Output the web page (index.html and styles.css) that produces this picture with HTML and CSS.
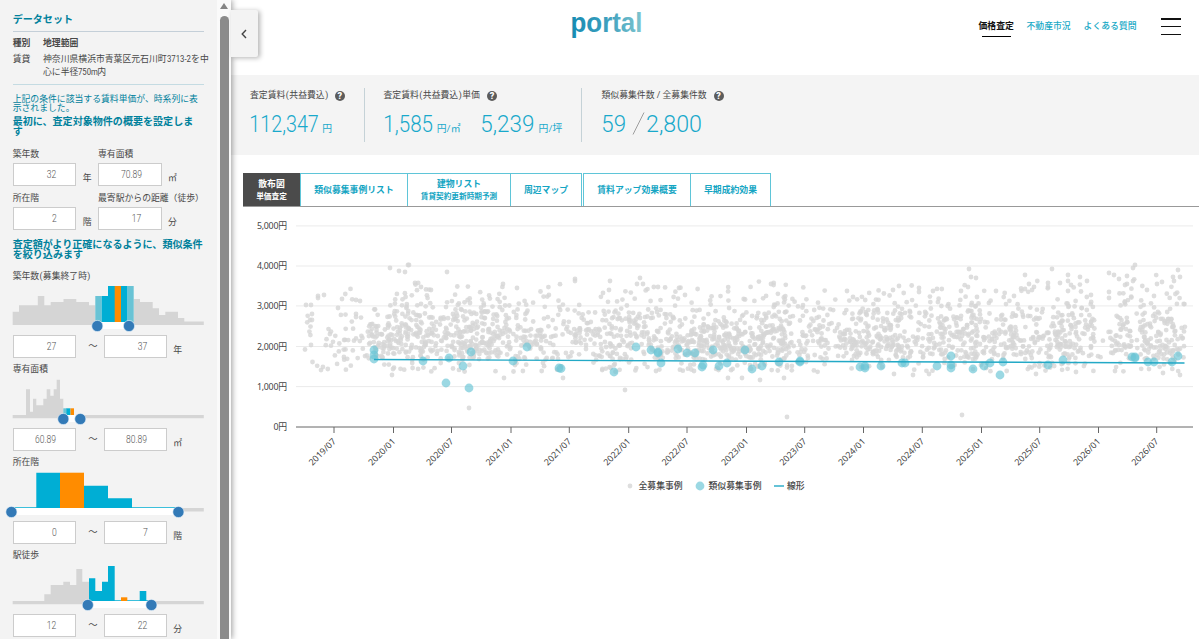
FILE: index.html
```html
<!DOCTYPE html>
<html lang="ja">
<head>
<meta charset="utf-8">
<title>portal</title>
<link rel="stylesheet" href="styles.css">
</head>
<body>
<div class="app">
  <aside class="sidebar">
    <div class="panel">
      <h2 class="title">データセット</h2>
      <dl class="dataset">
        <dt class="strong">種別</dt><dd class="strong">地理範囲</dd>
        <dt>賃貸</dt><dd>神奈川県横浜市青葉区元石川町<span class="num addr">3713-2</span>を中<br>心に半径<span class="num addr2">750m</span>内</dd>
      </dl>
      <p class="note">上記の条件に該当する賃料単価が、時系列に表<br>示されました。</p>
      <h3 class="lead">最初に、査定対象物件の概要を設定しま<br>す</h3>
      <div class="fields">
        <div class="field"><label>築年数</label><div class="entry"><div class="box"><span>32</span></div><i>年</i></div></div>
        <div class="field"><label>専有面積</label><div class="entry"><div class="box"><span>70.89</span></div><i>㎡</i></div></div>
        <div class="field"><label>所在階</label><div class="entry"><div class="box"><span>2</span></div><i>階</i></div></div>
        <div class="field"><label>最寄駅からの距離（徒歩）</label><div class="entry"><div class="box"><span>17</span></div><i>分</i></div></div>
      </div>
      <h3 class="lead second">査定額がより正確になるように、類似条件<br>を絞り込みます</h3>

      <section class="filter">
        <label>築年数<span class="par">(</span>募集終了時<span class="par">)</span></label>
        <svg class="hist" viewBox="0 282 217 50">
          <path class="g" d="M12.7 325V311.7H19V305.3H37.8V296H44.3V305.3H50.7V302H63.5V299H76.3V302H89V305.3H95.3V322H133.7V299H140V302H152.7V308.3H159V315H165.3V311.7H178V318H184.3V321.5H203.8V325Z"/>
          <path class="w" d="M97 321.5H129V329H97Z"/>
          <path class="l" d="M95.3 296H101.7V322H95.3ZM127.3 286H133.7V322H127.3Z"/>
          <path class="b" d="M101.7 322V296H108V286H127.3V322Z"/>
          <path class="o" d="M114.7 286H121V322H114.7Z"/>
          <circle cx="97.3" cy="326" r="5.6"/><circle cx="129" cy="326" r="5.6"/>
        </svg>
        <div class="range"><div class="box"><span>27</span></div><b>～</b><div class="box"><span>37</span></div><i>年</i></div>
      </section>
      <section class="filter">
        <label>専有面積</label>
        <svg class="hist" viewBox="0 375 217 50">
          <path class="g" d="M12.7 418.3V415H26V389.3H30V411.7H33V398.7H36.3V405.3H43.3V398.7H46.7V389.3H50.3V395.7H53.7V389.3H56.7V379.7H60V398.7H63.3V415H203.8V418.3Z"/>
          <path class="w" d="M64 415H80V422H64Z"/>
          <path class="l" d="M63.3 408.3H67V415H63.3Z"/><path class="b" d="M66.5 408.3H70.5V415H66.5Z"/><path class="o" d="M70.5 408.3H74V415H70.5Z"/>
          <circle cx="63.3" cy="419" r="5.6"/><circle cx="80.3" cy="419" r="5.6"/>
        </svg>
        <div class="range"><div class="box"><span>60.89</span></div><b>～</b><div class="box"><span>80.89</span></div><i>㎡</i></div>
      </section>
      <section class="filter">
        <label>所在階</label>
        <svg class="hist" viewBox="0 468 217 50">
          <path class="g" d="M178 508H203.8V511.5H178Z"/>
          <path class="w" d="M12 508H178V515H12Z"/>
          <path class="b" d="M12.7 507.3H36.3V472.7H60V507.3H84V485.7H108V498.3H132V507.3H178V508H12.7Z"/>
          <path class="o" d="M60 472.7H84V508H60Z"/>
          <circle cx="11.4" cy="512" r="5.6"/><circle cx="178.4" cy="512" r="5.6"/>
        </svg>
        <div class="range"><div class="box"><span>0</span></div><b>～</b><div class="box"><span>7</span></div><i>階</i></div>
      </section>
      <section class="filter">
        <label>駅徒歩</label>
        <svg class="hist" viewBox="0 561 217 50">
          <path class="g" d="M12.7 604.3V601H44.3V594.3H50.7V585H63.3V581.7H70V585H76.3V569H82.3V581.7H89V601H203.8V604.3Z"/>
          <path class="w" d="M88 601H151V608H88Z"/>
          <path class="b" d="M89 601V578.3H95.3V591H102V581.7H108V566H114.7V600.3H139.7V591H146.3V600.3H151V601Z"/>
          <path class="o" d="M121 597.3H127.3V601H121Z"/>
          <circle cx="87.8" cy="605" r="5.6"/><circle cx="151.4" cy="605" r="5.6"/>
        </svg>
        <div class="range"><div class="box"><span>12</span></div><b>～</b><div class="box"><span>22</span></div><i>分</i></div>
      </section>
    </div>
    <div class="scroll"><span class="arrow"></span><span class="thumb"></span></div>
    <button class="toggle" aria-label="閉じる"><svg viewBox="0 0 8 10"><path d="M6 1L2.2 5L6 9"/></svg></button>
  </aside>

  <main class="main">
    <header class="header">
      <svg class="logo" viewBox="0 0 74 36">
        <defs><linearGradient id="lg"><stop offset="0" stop-color="#168bb2"/><stop offset=".5" stop-color="#3b9fbe"/><stop offset="1" stop-color="#7fc5cf"/></linearGradient></defs>
        <text x="-.5" y="24.5" textLength="72" lengthAdjust="spacingAndGlyphs" fill="url(#lg)">portal</text>
      </svg>
      <nav class="nav"><a class="on">価格査定</a><a>不動産市況</a><a>よくある質問</a></nav>
      <div class="burger"><span></span><span></span><span></span></div>
    </header>

    <section class="stats">
      <div class="stat s1">
        <div class="cap"><span>査定賃料<span class="par">(</span>共益費込<span class="par">)</span></span><em>?</em></div>
        <div class="value">
          <svg class="n" width="71" height="30"><text x="-.7" y="24" textLength="69.5" lengthAdjust="spacingAndGlyphs">112,347</text></svg>
          <span class="u">円</span>
        </div>
      </div>
      <div class="stat s2">
        <div class="cap"><span>査定賃料<span class="par">(</span>共益費込<span class="par">)</span>単価</span><em>?</em></div>
        <div class="value">
          <svg class="n" width="52" height="30"><text x="-.7" y="24" textLength="49.7" lengthAdjust="spacingAndGlyphs">1,585</text></svg>
          <span class="u">円/㎡</span>
          <svg class="n next" width="56" height="30"><text x="-.7" y="24" textLength="54" lengthAdjust="spacingAndGlyphs">5,239</text></svg>
          <span class="u">円/坪</span>
        </div>
      </div>
      <div class="stat s3">
        <div class="cap"><span>類似募集件数 / 全募集件数</span><em>?</em></div>
        <div class="value">
          <svg class="n" width="26" height="30"><text x="-.7" y="24" textLength="24.7" lengthAdjust="spacingAndGlyphs">59</text></svg>
          <svg class="slash" width="19" height="30"><path d="M5 26.5L16 4.5"/></svg>
          <svg class="n" width="60" height="30"><text x="-1" y="24" textLength="56" lengthAdjust="spacingAndGlyphs">2,800</text></svg>
        </div>
      </div>
    </section>

    <nav class="tabs">
      <a class="tab active">散布図<small>単価査定</small></a>
      <a class="tab t2">類似募集事例リスト</a>
      <a class="tab t3">建物リスト<small>賃貸契約更新時期予測</small></a>
      <a class="tab t4">周辺マップ</a>
      <a class="tab t5">賃料アップ効果概要</a>
      <a class="tab t6">早期成約効果</a>
    </nav>
    <svg class="chart" id="chart" viewBox="243 207 956 300"></svg>
  </main>
</div>
<script src="chart.js"></script>
</body>
</html>
```
FILE: styles.css
```css
* { box-sizing: border-box; }
body {
  margin: 0;
  background: #fff;
  color: #484848;
  font: 8.83px/12.3px Roboto, "Noto Sans CJK JP", sans-serif;
  overflow: hidden;
}
.app { display: flex; height: 639px; overflow: hidden; }
i, em { font-style: normal; }
b { font-weight: 400; }

.sidebar { position: relative; display: flex; width: 231px; flex: none; height: 639px; background: #f3f3f3; box-shadow: 1px 0 6px rgba(0,0,0,.4); z-index: 2; }
.panel { width: 217px; height: 639px; overflow: hidden; padding: 10px 0 0 12.7px; white-space: nowrap; }
.title { margin: 0; height: 21.5px; width: 191px; font-size: 10.05px; line-height: 20.8px; color: #00819c; border-bottom: 1px solid #c4cfd8; }
.dataset { display: grid; grid-template-columns: 30.3px 1fr; margin: 0; width: 191px; height: 53.5px; align-content: start; row-gap: 4.6px; padding-top: 5px; border-bottom: 1px solid #c4dbe2; }
.dataset dt, .dataset dd { margin: 0; }
.strong { font-weight: 700; }
.num { display: inline-block; transform-origin: left; transform: scaleX(.88); }
.addr { width: 24.5px; }
.addr2 { width: 19px; }
.note { margin: 9.5px 0 0; line-height: 9px; height: 21.5px; color: #00819c; }
.lead { margin: 0; font-size: 10.05px; line-height: 10.05px; font-weight: 700; color: #00819c; height: 32px; padding-top: .5px; }
.fields { display: grid; grid-template-columns: 85.3px 1fr; grid-auto-rows: 44.2px; height: 91.5px; }
label, .field label { display: block; height: 15px; line-height: 13.6px; }
.entry { display: flex; }
.entry i { margin: 9px 0 0 6.5px; }
.box { width: 63.6px; height: 22.8px; border: 1px solid #ccc; background: #fff; text-align: right; padding-right: 19px; font-size: 10.2px; line-height: 21.4px; color: #555; }
.box span { display: inline-block; transform: scaleX(.84); transform-origin: right; font-weight: 300; }
.second { height: 29px; padding-top: 0; }
.filter { height: 93.1px; }
.filter label { height: 13.5px; line-height: 14.8px; }
.filter .par { margin: 0 .3px; }
.hist { display: block; width: 217px; height: 50px; margin-left: -12.7px; overflow: visible; }
.hist .g { fill: #d5d5d5; }
.hist .w { fill: #fff; }
.hist .b { fill: #00aed4; }
.hist .l { fill: #69c3d5; }
.hist .o { fill: #ff8c00; }
.hist circle { fill: #337ab7; stroke: #e8f2fa; stroke-width: .6; }
.range { display: flex; margin-top: 2.8px; }
.range b { width: 27.4px; text-align: center; line-height: 22px; font-size: 9.3px; padding-left: 6px; }
.range i { margin: 9px 0 0 6px; }

.scroll { width: 14px; background: #fafafa; display: flex; flex-direction: column; align-items: center; }
.arrow { margin-top: 3px; border: 4.5px solid transparent; border-top: 0; border-bottom: 6px solid #858585; }
.thumb { margin-top: 7px; width: 9px; height: 640px; background: #8b8b8b; border-radius: 5px; flex: none; }
.toggle { position: absolute; left: 231px; top: 10px; width: 27px; height: 47px; padding: 0 2px 0 0; border: 0; background: #f3f3f3; box-shadow: 2px 1px 5px rgba(0,0,0,.3); border-radius: 0 2px 2px 0; display: flex; align-items: center; justify-content: center; }
.toggle svg { width: 8px; height: 10px; }
.toggle path { fill: none; stroke: #444; stroke-width: 1.4; }

.main { flex: 1; min-width: 0; }
.header { height: 75px; display: flex; align-items: flex-start; padding-left: 340px; }
.logo { width: 74px; height: 36px; margin-top: 7px; overflow: visible; }
.logo text { font: 700 27px "Liberation Sans", sans-serif; }
.nav { display: flex; gap: 12.7px; margin: 19.5px 0 0 333.5px; font-weight: 500; color: #18a9c6; }
.nav a { width: 44.4px; white-space: nowrap; }
.nav a:last-child { width: 53px; }
.nav .on { width: 35.3px; color: #111; font-weight: 700; height: 18px; display: flex; flex-direction: column; }
.nav .on::after { content: ""; height: 1.2px; background: #000; margin: 4.2px 3px 0; flex: none; }
.burger { margin: 18px 0 0 24.5px; width: 20px; height: 17px; display: flex; flex-direction: column; justify-content: space-between; }
.burger span { height: 1.5px; background: #111; }

.stats { height: 79.5px; background: #f4f4f4; display: flex; padding: 13px 0 0 19px; }
.stat { height: 54px; white-space: nowrap; }
.s1 { width: 115px; border-right: 1px solid #c5d2d7; margin-right: 18.5px; }
.s2 { width: 198.5px; border-right: 1px solid #c5d2d7; margin-right: 19.5px; }
.cap { display: flex; height: 20px; padding-top: 1px; gap: 7px; }
.par { margin: 0 .5px; }
.cap em { width: 10px; height: 10px; margin-top: 2px; border-radius: 50%; background: #5c5c5c; color: #fff; font: 900 9px/10.5px Roboto, sans-serif; text-align: center; }
.s1 .cap { gap: 6px; }
.value { display: flex; height: 30px; }
.value svg { flex: none; overflow: visible; }
.n text { font-size: 23.6px; font-weight: 350; fill: #18a9cb; }
.u { margin: 14.3px 0 0 1.3px; height: 13px; line-height: 13px; font-size: 9.8px; color: #18a9cb; }
.s2 .u { width: 25px; }
.next { margin-left: 19.5px; }
.slash path { stroke: #888; stroke-width: .8; fill: none; }

.tabs { display: flex; height: 34px; margin-top: 18.5px; margin-left: 12px; border-bottom: 1px solid #999; }
.tab { height: 33px; border: 1px solid #5fc5d8; border-bottom: 0; display: flex; flex-direction: column; align-items: center; justify-content: center; font-weight: 700; color: #14a5c3; white-space: nowrap; line-height: 11.5px; padding-top: 1px; }
.tab small { font-size: 7.65px; line-height: 11px; }
.active { width: 57px; background: #4b4b4b; border-color: #4b4b4b; color: #fff; }
.t2 { width: 108px; }
.t3 { width: 104px; margin-left: -1px; }
.t4 { width: 72px; margin-left: -1px; }
.t5 { width: 108px; margin-left: 1px; }
.t6 { width: 81px; margin-left: -1px; }

.chart { display: block; width: 956px; height: 300px; margin-left: 12px; font: 8.83px "Noto Sans", "Noto Sans CJK JP", sans-serif; fill: #444; }
.tick { letter-spacing: -.25px; }
.grid { stroke: #ebebeb; stroke-width: 1; }
.axis { stroke: #666; stroke-width: 1; }
.all { fill: #d6d6d6; fill-opacity: .8; }
.similar { fill: #6cc5d5; fill-opacity: .68; }
.trend { stroke: #23a9c6; stroke-width: 1.4; }
.key { font-weight: 500; }
```
FILE: chart.js
```js
const svg = document.getElementById('chart');
const NS = 'http://www.w3.org/2000/svg';
function add(name, attrs, text) {
  const node = document.createElementNS(NS, name);
  for (const key in attrs) node.setAttribute(key, attrs[key]);
  if (text) node.textContent = text;
  svg.appendChild(node);
}
const rows = [[225.9, '5,000円'], [266, '4,000円'], [305.9, '3,000円'], [346.5, '2,000円'], [386.6, '1,000円'], [427, '0円']];
rows.forEach(([y, label], i) => {
  if (i < 5) add('line', {class: 'grid', x1: 296, x2: 1193, y1: y, y2: y});
  add('text', {class: 'tick', x: 286.8, y: y + 3.3, 'text-anchor': 'end'}, label);
});

let seed = 7129;
function rnd() { seed = (seed * 16807) % 2147483647; return seed / 2147483647; }
function dot(x, y) { add('circle', {class: 'all', cx: x.toFixed(1), cy: y.toFixed(1), r: 2.4}); }

/* Listings per horizontal band: start, end, count, highest y */
const bands = [
  [304, 370, 60, 294], [370, 394, 70, 306], [394, 430, 125, 288], [430, 460, 85, 288],
  [460, 500, 155, 292], [500, 545, 105, 290], [545, 590, 75, 290], [590, 630, 105, 295],
  [630, 690, 150, 292], [690, 740, 180, 293], [740, 790, 180, 290], [790, 850, 115, 292],
  [850, 905, 175, 295], [905, 940, 70, 291], [940, 990, 150, 295], [990, 1045, 130, 288],
  [1045, 1095, 150, 286], [1095, 1116, 14, 318], [1116, 1150, 90, 288], [1150, 1185, 100, 281]
];
bands.forEach(([a, b, n, top]) => {
  for (let i = 0; i < n; i++) {
    const x = a + rnd() * (b - a);
    const low = rnd() < .05;
    const y = low ? 362 + rnd() * 10 : 360 - Math.pow((rnd() + rnd()) / 2, 1.65) * (361 - top) * 1.15;
    dot(x, y);
  }
});
const outliers = [
  [390,268],[399,271],[408,265],[409,265],[405,272],[447,272],[415,283],[421,287],[431,290],[469,408],
  [503,284],[517,288],[575,279],[575,281],[504,378],[392,375],[563,378],[610,281],[609,290],[603,293],
  [637,284],[640,278],[643,284],[658,287],[679,288],[685,295],[625,390],[728,378],[742,378],[760,380],
  [771,284],[787,417],[784,378],[847,291],[853,297],[893,290],[899,286],[919,288],[919,292],[933,291],
  [969,269],[971,277],[976,278],[968,287],[961,291],[977,297],[962,415],[996,291],[1014,296],[1025,275],
  [1029,284],[1034,287],[1025,289],[1032,290],[1048,283],[1048,287],[1052,269],[1060,283],[1068,275],
  [1068,281],[1071,285],[1080,277],[1087,281],[1068,291],[1091,295],[1109,273],[1114,275],[1119,279],
  [1109,292],[1109,298],[1127,276],[1127,284],[1125,285],[1133,281],[1133,268],[1135,265],[1157,284],
  [1162,282],[1173,277],[1174,281],[1178,270],[1180,277],[1147,290],[1154,296],[1180,375],[1163,373],
  [1115,371],[1076,372],[1036,374],[913,375],[894,374],[929,374],[306,305],[311,305],[318,296],[318,298],
  [324,295],[338,308],[342,299],[356,300],[360,301],[356,317],[312,314],[312,320]
];
outliers.forEach(([x, y]) => dot(x, y));

const similar = [
  [374,350],[374,355],[374,359],[423,361],[449,358],[463,366],[471,352],[446,383],[469,388],[513,361],[527,347],
  [559,368],[561,368.5],[614,372],[636,347],[651,350],[658,353],[658,352],[661,363],[678,349],[687,353],[695,353],
  [702,367],[703,365],[713,350],[719,366],[727,363],[745,350],[752,369],[762,366],[779,362],[800,361],[800,362],
  [860,367],[865,368],[865,366],[881,366],[902,363],[905,363],[937,366],[951,356],[951,365],[951,368],[973,369],
  [984,366],[990,363],[1000,375],[1003,362],[1048,365],[1063,360],[1132,357],[1135,358],[1135,357],[1148,362],
  [1154,362],[1172,362],[1178,356]
];
similar.forEach(([x, y]) => add('circle', {class: 'similar', cx: x, cy: y, r: 4.4}));
add('line', {class: 'trend', x1: 374, y1: 359.5, x2: 1184.5, y2: 363});

add('line', {class: 'axis', x1: 296, x2: 1193, y1: 427, y2: 427});
const ticks = [[334,'2019/07'],[393.5,'2020/01'],[451.5,'2020/07'],[511,'2021/01'],[569.3,'2021/07'],[628.7,'2022/01'],[687,'2022/07'],[746.5,'2023/01'],[804.7,'2023/07'],[863.5,'2024/01'],[922.3,'2024/07'],[981.5,'2025/01'],[1039.7,'2025/07'],[1098.5,'2026/01'],[1156.7,'2026/07']];
ticks.forEach(([x, label]) => {
  add('line', {class: 'axis', x1: x, x2: x, y1: 427, y2: 433});
  add('text', {'text-anchor': 'end', transform: `translate(${x + 2.5} 442) rotate(-45)`, textLength: 34}, label);
});
add('circle', {class: 'all', cx: 630, cy: 486, r: 2.4});
add('text', {class: 'key', x: 638.5, y: 489}, '全募集事例');
add('circle', {class: 'similar', cx: 700, cy: 486, r: 4.4});
add('text', {class: 'key', x: 708.5, y: 489}, '類似募集事例');
add('line', {class: 'trend', x1: 774, x2: 784, y1: 486, y2: 486});
add('text', {class: 'key', x: 787, y: 489}, '線形');
```
